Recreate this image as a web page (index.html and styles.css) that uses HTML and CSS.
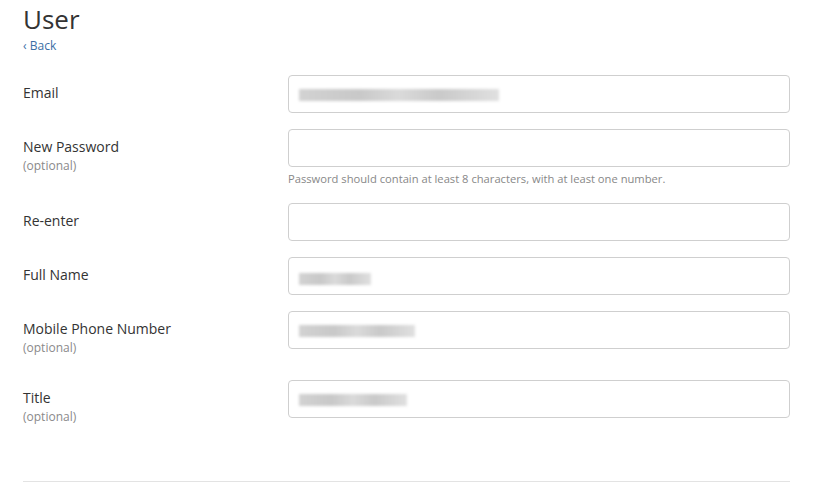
FILE: index.html
```html
<!DOCTYPE html>
<html>
<head>
<meta charset="utf-8">
<link rel="stylesheet" href="styles.css">
</head>
<body>
<div class="page">
  <h1 class="title">User</h1>
  <a class="back" href="#"><span class="chev">‹</span> Back</a>
  <form class="form">
    <div class="row">
      <div class="label"><div class="name">Email</div></div>
      <div class="field">
        <div class="input"><span class="blur w-email"></span></div>
      </div>
    </div>
    <div class="row">
      <div class="label"><div class="name">New Password</div><div class="opt">(optional)</div></div>
      <div class="field">
        <div class="input"></div>
        <div class="help">Password should contain at least 8 characters, with at least one number.</div>
      </div>
    </div>
    <div class="row">
      <div class="label"><div class="name">Re-enter</div></div>
      <div class="field"><div class="input"></div></div>
    </div>
    <div class="row">
      <div class="label"><div class="name">Full Name</div></div>
      <div class="field"><div class="input"><span class="blur w-name"></span></div></div>
    </div>
    <div class="row">
      <div class="label"><div class="name">Mobile Phone Number</div><div class="opt">(optional)</div></div>
      <div class="field"><div class="input"><span class="blur w-phone"></span></div></div>
    </div>
    <div class="row last">
      <div class="label"><div class="name">Title</div><div class="opt">(optional)</div></div>
      <div class="field"><div class="input"><span class="blur w-title"></span></div></div>
    </div>
  </form>
  <hr class="divider">
</div>
</body>
</html>
```
FILE: styles.css
```css
* { box-sizing: border-box; }
body {
  margin: 0;
  background: #fff;
  font-family: "Open Sans", "Liberation Sans", sans-serif;
  color: #333;
}
.page {
  padding: 4px 26px 0 23px;
}
.title {
  margin: 0;
  font-size: 26px;
  font-weight: 400;
  line-height: 30px;
  color: #333;
}
.back {
  display: block;
  margin-top: 3px;
  font-size: 12px;
  line-height: 18px;
  color: #3b6ea5;
  text-decoration: none;
}
.chev { font-size: 12px; color: #3b6ea5; }
.form {
  margin-top: 20px;
}
.row {
  display: grid;
  grid-template-columns: 265px 1fr;
  margin-bottom: 16px;
}
.label {
  padding-top: 8px;
}
.name {
  font-size: 14px;
  line-height: 20px;
  color: #333;
}
.opt {
  font-size: 12px;
  line-height: 18px;
  color: #8a8a8a;
}
.input {
  height: 38px;
  border: 1px solid #cfcfcf;
  border-radius: 4px;
  padding: 12px 10px 0;
  background: #fff;
}
.help {
  font-size: 11.2px;
  line-height: 16px;
  color: #888;
  margin-top: 4px;
}
.blur {
  display: block;
  height: 12px;
  background: linear-gradient(90deg, #d2d2d2 0%, #c8c8c8 30%, #dadada 50%, #c9c9c9 70%, #e0e0e0 100%);
  filter: blur(1.5px);
}
.w-email { width: 200px; margin-top: 1px; }
.w-name { width: 72px; margin-top: 3px; }
.w-phone { width: 116px; margin-top: 1px; }
.w-title { width: 108px; margin-top: 1px; }
.row:nth-child(5) { margin-bottom: 23px; }
.last { margin-bottom: 0; }
.divider {
  margin: 55px 0 0;
  border: 0;
  border-top: 1px solid #e3e3e3;
}
```
